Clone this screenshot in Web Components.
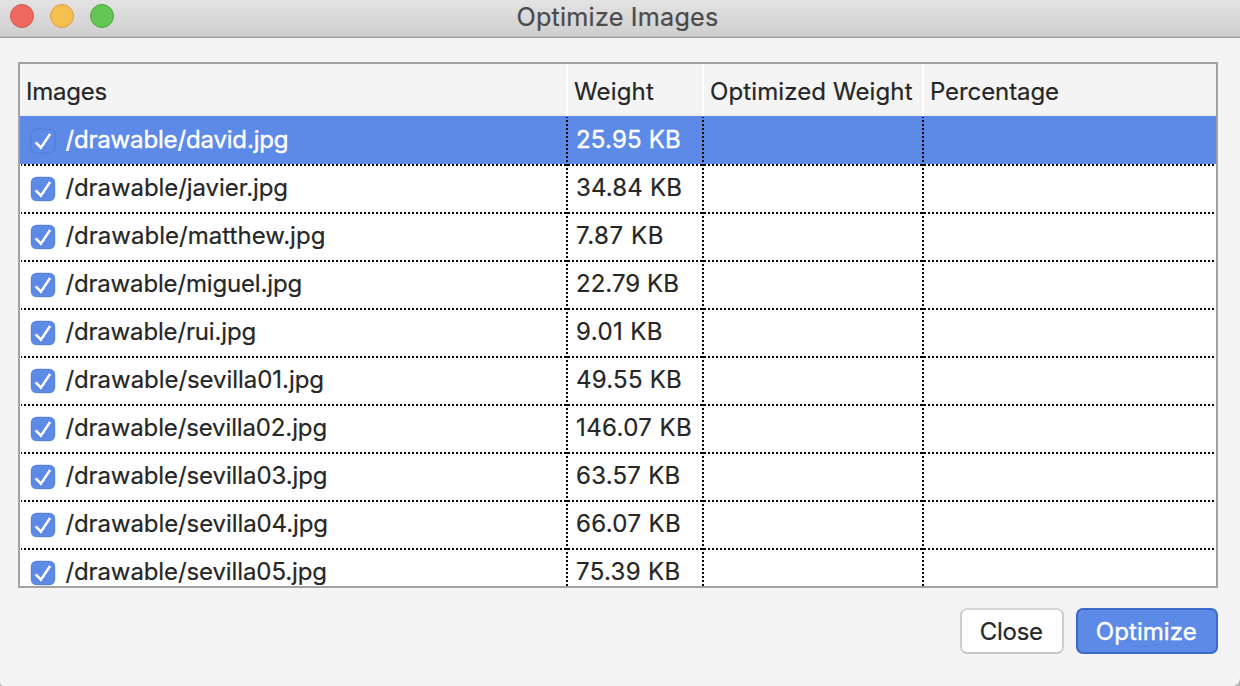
<!DOCTYPE html>
<html lang="en">
<head>
<meta charset="utf-8">
<title>Optimize Images</title>
<style>
html,body{margin:0;height:100%;overflow:hidden;background:#b4b4b4}
body{font-family:Inter,"Liberation Sans",sans-serif;color:#262626;-webkit-text-stroke:.22px}
</style>
</head>
<body>
<optimize-window></optimize-window>
<script>
class TitleBar extends HTMLElement{
  constructor(){super();this.attachShadow({mode:'open'}).innerHTML=`<style>
:host{display:grid;grid-template-columns:1fr auto 1fr;box-sizing:border-box;height:38px;padding-right:5px;background:linear-gradient(#e3e3e3,#cecece);border-bottom:1px solid #a0a0a0;box-shadow:inset 0 -1px #b9b9b9;color:#4b4b4b;font-size:25.2px;line-height:34px}
.lights{display:flex;gap:16px;padding:4px 0 0 10px}
i{box-sizing:border-box;width:24px;height:24px;border-radius:50%;border:1px solid}
.r{background:#ed6a5f;border-color:#d9554d}.y{background:#f5bf50;border-color:#d9a040}.g{background:#62c655;border-color:#4fa83f}
</style><div class="lights"><i class="r"></i><i class="y"></i><i class="g"></i></div><fit-text w="202"><slot></slot></fit-text>`}
}
/* Keeps a label at a fixed advance width by adjusting its tracking. */
class FitText extends HTMLElement{
  constructor(){super();this.attachShadow({mode:'open'}).innerHTML=`<style>:host{display:inline-block;white-space:nowrap}span{display:inline-block}</style><span><slot></slot></span>`}
  connectedCallback(){
    const s=this.shadowRoot.querySelector('span'),w=+this.getAttribute('w');
    if(!w)return;
    requestAnimationFrame(()=>{
      const slot=this.querySelector('slot');
      const n=(slot?slot.assignedNodes().map(x=>x.textContent).join(''):this.textContent).trim().length;
      s.style.letterSpacing=((w-s.getBoundingClientRect().width)/n)+'px';
    });
  }
}
class CheckMark extends HTMLElement{
  constructor(){super();this.attachShadow({mode:'open'}).innerHTML=`<style>
:host{display:block;width:26px;height:26px}svg{display:block}
</style><svg width="26" height="26" viewBox="0 0 26 26"><rect x="1" y="1" width="24" height="24" rx="5.5" fill="#5c8ae6" stroke="#3c64b4" stroke-opacity=".32"/><path d="M5.6 14.3 10.9 19.7 20.1 6" fill="none" stroke="#fff" stroke-width="2.6"/></svg>`}
}
class ImageRow extends HTMLElement{
  constructor(){super();this.attachShadow({mode:'open'}).innerHTML=`<style>
:host{display:grid;grid-template-columns:548px 136px 220px 1fr;height:48px;line-height:48px;font-size:24px;background:#fff}
:host([selected]){background:#5c8ae6;color:#fff;-webkit-text-stroke:.4px}
.n{display:flex;padding-left:10px}
check-mark{margin:12px 9.4px 0 0}
.w{padding-left:8px}
</style><div class="n"><check-mark></check-mark><slot name="name"></slot></div><div class="w"><slot name="weight"></slot></div><div></div><div></div>`}
}
class ImageTable extends HTMLElement{
  constructor(){super();
    const data=[['david',223,'25.95',105],['javier',222.6,'34.84',106],['matthew',260,'7.87',88],['miguel',236.6,'22.79',103],['rui',190.6,'9.01',87],['sevilla01',258.6,'49.55',106],['sevilla02',261.6,'146.07',116],['sevilla03',262,'63.57',104.5],['sevilla04',262.6,'66.07',105],['sevilla05',261.6,'75.39',104.5]];
    const lines=[48,96,144,192,240,288,336,384,432].map(y=>`<line x1="1" x2="1195" y1="${y+1}" y2="${y+1}"/>`).join('')+[547,683,903].map(x=>`<line x1="${x}" x2="${x}" y1="1" y2="470"/>`).join('');
    this.attachShadow({mode:'open'}).innerHTML=`<style>
:host{display:flex;flex-direction:column;box-sizing:border-box;height:526px;border:2px solid #a3a3a3;background:#fff;overflow:hidden}
header{flex:none;display:grid;grid-template-columns:548px 136px 220px 1fr;box-sizing:border-box;height:52px;border-bottom:2px solid #ececec;background:#f4f4f4;font-size:24px;line-height:55px}
header div{padding-left:6px;box-sizing:border-box;border-right:2px solid #fff}
header div:last-child{border:0}
.body{position:relative;flex:none;height:470px;overflow:hidden}
svg{position:absolute;left:0;top:0}
line{stroke:#000;stroke-width:2;stroke-dasharray:2 2;stroke-dashoffset:1}
</style><header><div><fit-text w="81">Images</fit-text></div><div><fit-text w="80">Weight</fit-text></div><div><fit-text w="202.6">Optimized Weight</fit-text></div><div><fit-text w="129">Percentage</fit-text></div></header>
<div class="body">${data.map((d,i)=>`<image-row ${i?'':'selected'}><fit-text slot="name" w="${d[1]}">/drawable/${d[0]}.jpg</fit-text><fit-text slot="weight" w="${d[3]}">${d[2]} KB</fit-text></image-row>`).join('')}<svg width="1196" height="470" shape-rendering="crispEdges">${lines}</svg></div>`}
}
class PushButton extends HTMLElement{
  constructor(){super();this.attachShadow({mode:'open'}).innerHTML=`<style>
:host{display:block}
button{display:flex;justify-content:center;box-sizing:border-box;width:104px;height:46px;padding:0 1.4px 0 0;border:2px solid #cdcdcd;border-top-color:#d4d4d4;border-bottom-color:#c6c6c6;border-radius:7px;background:#fff;color:#262626;font:24px/43px Inter,"Liberation Sans",sans-serif;-webkit-text-stroke:.22px}
:host([primary]) button{width:142px;border-color:#3b69c9;background:#5c8ae6;color:#fff;-webkit-text-stroke:.4px}
</style><button><slot></slot></button>`}
}
class OptimizeWindow extends HTMLElement{
  constructor(){super();this.attachShadow({mode:'open'}).innerHTML=`<style>
:host{display:block;height:686px;overflow:hidden;background:#f4f4f4;border-radius:0 0 8px 4px}
main{padding:24px 22px 0 18px}
footer{display:flex;justify-content:flex-end;gap:12px;padding-top:20px}
</style><title-bar>Optimize Images</title-bar><main><image-table></image-table><footer><push-button><fit-text w="63">Close</fit-text></push-button><push-button primary><fit-text w="101">Optimize</fit-text></push-button></footer></main>`}
}
customElements.define('fit-text',FitText);
customElements.define('check-mark',CheckMark);
customElements.define('title-bar',TitleBar);
customElements.define('image-row',ImageRow);
customElements.define('image-table',ImageTable);
customElements.define('push-button',PushButton);
customElements.define('optimize-window',OptimizeWindow);
</script>
</body>
</html>
